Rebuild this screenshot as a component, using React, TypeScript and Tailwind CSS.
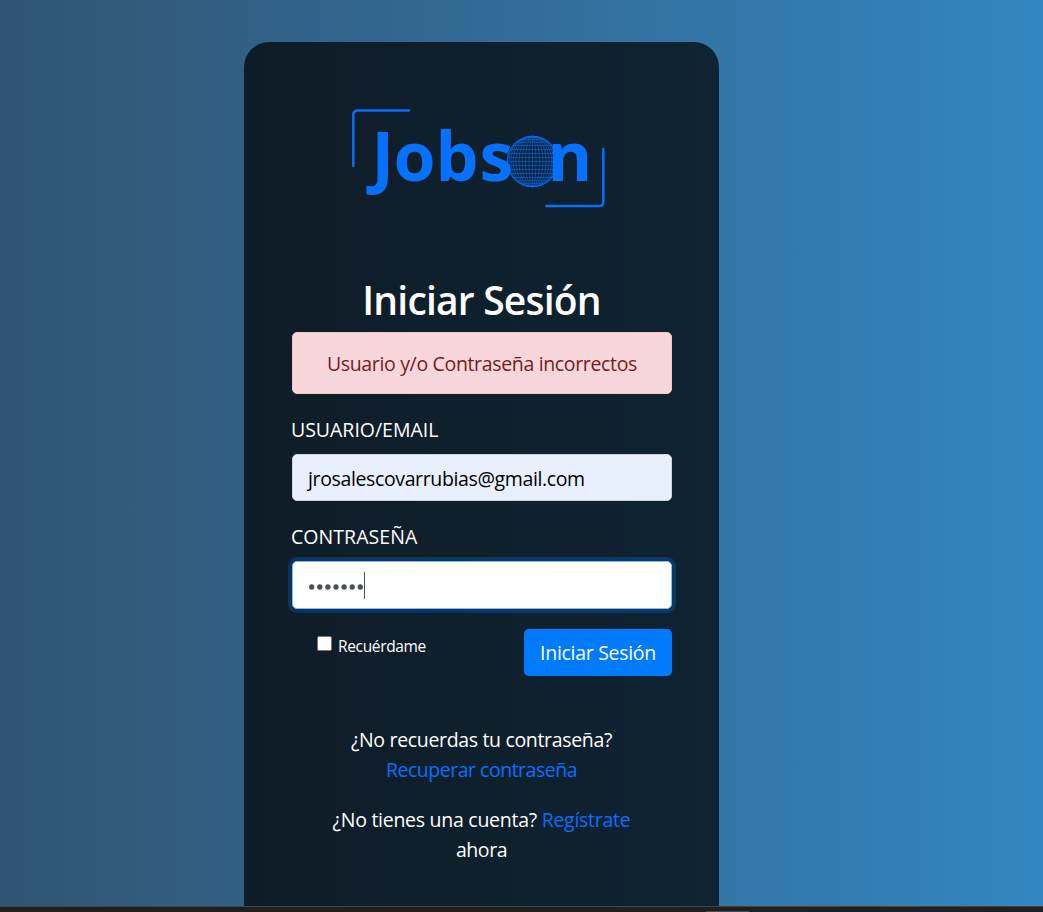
import React from "react";

const meridians = [0, 3.5, 7, 10.4, 13.6, 16.6, 19.3, 21.6, 23.5];
const parallels = [0, 4, 8, 12, 16, 19.3, 22, 24];

function Globe() {
  const r = 25.2;
  return (
    <g transform="translate(532.5 161.5)" fill="none" stroke="#0670ff">
      <circle r={r} strokeWidth="1.2" opacity="0.85" />
      <g strokeWidth="0.9" opacity="0.68">
        <line x1="0" y1={-r} x2="0" y2={r} />
        {meridians.slice(1).map((m) => (
          <ellipse key={m} rx={m} ry={r} />
        ))}
        {parallels.map((p) => {
          const w = Math.sqrt(r * r - p * p);
          return (
            <g key={p}>
              <path d={`M${-w} ${p}H${w}`} />
              {p > 0 && <path d={`M${-w} ${-p}H${w}`} />}
            </g>
          );
        })}
      </g>
    </g>
  );
}

function Logo() {
  return (
    <svg className="block h-[110px] w-[270px]" viewBox="344 102 270 110" role="img" aria-label="Jobson">
      <g fill="none" stroke="#0670ff" strokeWidth="2.4" strokeLinecap="round">
        <path d="M357 110.500H409M353.300 114.500V166M353.300 114.500Q353.500 111 357 110.500" />
        <path d="M546.500 206H600M603.300 149V202M603.300 202Q603.300 206 599.500 206" />
      </g>
      <Globe />
      <g fill="#0670ff" fontFamily="'Open Sans', 'Noto Sans', sans-serif" fontWeight="700" fontSize="68">
        <text x="371.500" y="181">J</text>
        <text x="393.500" y="181">o</text>
        <text x="435.500" y="181">b</text>
        <text x="479.500" y="181">s</text>
        <text x="547.500" y="181">n</text>
      </g>
    </svg>
  );
}

export default function App() {
  return (
    <div className="flex h-[912px] w-[1043px] flex-col overflow-hidden bg-[#202020] font-['Open_Sans','Noto_Sans',sans-serif] text-[19.5px] leading-[30px] text-white">
      <main className="flex h-[906px] shrink-0 overflow-hidden bg-linear-to-r from-[#305473] to-[#3286c1] pt-[42px] pl-[244px]">
        <section className="flex h-[864px] w-[475px] flex-col rounded-t-[25px] bg-black/70 px-12">
          <div className="flex justify-center pt-[60px] pr-[5px]">
            <Logo />
          </div>
          <h1 className="mt-[64px] flex h-12 items-center justify-center text-[39px] leading-12 font-semibold tracking-[-0.8px] whitespace-nowrap">
            Iniciar Sesión
          </h1>
          <div className="mt-[8px] flex h-[62px] w-[380px] items-center justify-center rounded-[5px] border border-[#f5c6cb] bg-[#f8d7da] pt-[2px] tracking-[-0.34px] whitespace-nowrap text-[#721c24]">
            Usuario y/o Contraseña incorrectos
          </div>
          <label className="mt-[21px] -ml-px h-[30px] tracking-[-0.02px]">USUARIO/EMAIL</label>
          <div className="mt-[9px] flex h-[47px] w-[380px] items-center rounded-[5px] border border-[#ced4da] bg-[#e8f0fe] px-[15px] pt-[2px] tracking-[-0.37px] text-black">
            jrosalescovarrubias@gmail.com
          </div>
          <label className="mt-[21px] -ml-px h-[30px] tracking-[0.05px]">CONTRASEÑA</label>
          <div className="mt-[9px] flex h-[48px] w-[380px] items-center rounded-[5px] border border-[#80bdff] bg-white px-[15px] shadow-[0_0_0_4px_rgba(0,123,255,0.25)]">
            <svg className="mt-[3px] h-[8px] w-[56px]" viewBox="0 0 56 8" fill="#495057" aria-hidden="true">
              {[0, 1, 2, 3, 4, 5, 6].map((n) => (
                <circle key={n} cx={3.7 + n * 8.1} cy="4" r="2.65" />
              ))}
            </svg>
            <span className="h-[27px] w-px bg-[#495057]" />
          </div>
          <div className="mt-5 flex w-[380px] justify-between">
            <label className="flex items-start pl-[25px] text-[15.5px] tracking-[-0.35px]">
              <span className="mt-[7px] mr-[6px] size-[15px] rounded-[2px] border border-[#767676] bg-white" />
              <span className="pt-[2px]">Recuérdame</span>
            </label>
            <button className="h-[47px] w-[148px] rounded-[5px] bg-[#007bff] pt-px tracking-[-0.3px] whitespace-nowrap">
              Iniciar Sesión
            </button>
          </div>
          <div className="mt-[49px] flex flex-col items-center whitespace-nowrap">
            <p className="tracking-[-0.33px]">¿No recuerdas tu contraseña?</p>
            <a className="tracking-[-0.49px] text-[#0670ff]">Recuperar contraseña</a>
          </div>
          <div className="mt-5 flex flex-col items-center whitespace-nowrap">
            <p className="tracking-[-0.27px]">
              ¿No tienes una cuenta? <a className="text-[#0670ff]">Regístrate</a>
            </p>
            <p className="tracking-[-0.45px]">ahora</p>
          </div>
        </section>
      </main>
      <footer className="flex h-[6px] items-end border-t border-[#434343] bg-[#202020] pl-[706px]">
        <span className="h-px w-[43px] bg-[#4a4a4a]" />
      </footer>
    </div>
  );
}
